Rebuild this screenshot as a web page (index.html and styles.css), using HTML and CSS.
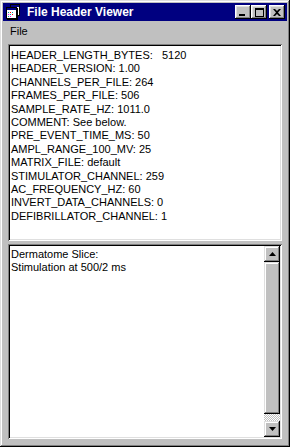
FILE: index.html
```html
<!doctype html>
<html lang="en">
<head>
  <meta charset="UTF-8">
  <title>File Header Viewer</title>
  <link rel="stylesheet" href="styles.css">
</head>
<body>
  <div class="window">
    <div class="titlebar">
      <svg class="app-icon" width="16" height="16" viewBox="0 0 16 16">
        <rect x="5.5" y="0.5" width="9" height="11" fill="#fff" stroke="#000"/>
        <rect x="6" y="1" width="8" height="2" fill="#000080"/>
        <rect x="1.5" y="3.5" width="10" height="11" fill="#fff" stroke="#000"/>
        <rect x="12" y="4" width="1" height="11" fill="#000"/>
        <rect x="2" y="15" width="11" height="1" fill="#000"/>
        <rect x="2" y="4" width="9" height="2" fill="#000080"/>
        <rect x="3" y="8" width="1" height="1" fill="#00a0a0"/>
        <rect x="5" y="8" width="1" height="1" fill="#ff0000"/>
        <rect x="7" y="8" width="1" height="1" fill="#00a0a0"/>
        <rect x="3" y="10" width="1" height="1" fill="#ff00ff"/>
        <rect x="5" y="10" width="1" height="1" fill="#00a0a0"/>
        <rect x="7" y="10" width="1" height="1" fill="#ff0000"/>
        <rect x="3" y="12" width="1" height="1" fill="#00a0a0"/>
        <rect x="5" y="12" width="1" height="1" fill="#ff00ff"/>
      </svg>
      <span class="title">File Header Viewer</span>
      <div class="caption-btns">
        <div class="cap-btn">
          <svg width="8" height="7" viewBox="0 0 8 7"><rect x="0" y="5" width="6" height="2" fill="#000"/></svg>
        </div>
        <div class="cap-btn">
          <svg width="9" height="9" viewBox="0 0 9 9"><rect x="0.5" y="0.5" width="8" height="8" fill="none" stroke="#000"/><rect x="0" y="1" width="9" height="1" fill="#000"/></svg>
        </div>
        <div class="cap-btn close">
          <svg width="8" height="7" viewBox="0 0 8 7"><path d="M0 0h2l2 2 2-2h2L5 3.5 8 7H6L4 5 2 7H0l3-3.5z" fill="#000"/></svg>
        </div>
      </div>
    </div>

    <div class="menubar">
      <span class="menu-item">File</span>
    </div>

    <div class="content">
      <div class="field header-box">
<pre class="text">HEADER_LENGTH_BYTES:   5120
HEADER_VERSION: 1.00
CHANNELS_PER_FILE: 264
FRAMES_PER_FILE: 506
SAMPLE_RATE_HZ: 1011.0
COMMENT: See below.
PRE_EVENT_TIME_MS: 50
AMPL_RANGE_100_MV: 25
MATRIX_FILE: default
STIMULATOR_CHANNEL: 259
AC_FREQUENCY_HZ: 60
INVERT_DATA_CHANNELS: 0
DEFIBRILLATOR_CHANNEL: 1</pre>
      </div>

      <div class="field comment-box">
<pre class="text comment">Dermatome Slice:
Stimulation at 500/2 ms</pre>
        <div class="scrollbar">
          <div class="sb-btn">
            <svg width="7" height="4" viewBox="0 0 7 4"><path d="M3.5 0L7 4H0z" fill="#000"/></svg>
          </div>
          <div class="sb-track">
            <div class="sb-thumb"></div>
          </div>
          <div class="sb-btn">
            <svg width="7" height="4" viewBox="0 0 7 4"><path d="M0 0h7L3.5 4z" fill="#000"/></svg>
          </div>
        </div>
      </div>
    </div>
  </div>
</body>
</html>
```

FILE: styles.css
```css
* {
  margin: 0;
  padding: 0;
  box-sizing: border-box;
}
body {
  background-color: #c0c0c0;
  font-family: "Liberation Sans", Arial, sans-serif;
  font-size: 11px;
  color: #000;
}
.window {
  width: 290px;
  height: 447px;
  padding: 3px;
  background-color: #c0c0c0;
  display: flex;
  flex-direction: column;
  box-shadow: inset -1px -1px #000, inset 1px 1px #dfdfdf,
              inset -2px -2px #808080, inset 2px 2px #fff;
}
.titlebar {
  height: 18px;
  background-color: #000080;
  display: flex;
  align-items: center;
  padding: 0 2px 0 2px;
}
.app-icon {
  display: block;
  margin-right: 6px;
}
.title {
  color: #fff;
  font-weight: bold;
  font-size: 12px;
  flex: 1;
}
.caption-btns {
  display: flex;
}
.cap-btn {
  width: 16px;
  height: 14px;
  background-color: #c0c0c0;
  display: flex;
  align-items: center;
  justify-content: center;
  box-shadow: inset -1px -1px #000, inset 1px 1px #fff,
              inset -2px -2px #808080, inset 2px 2px #dfdfdf;
}
.cap-btn svg {
  display: block;
}
.cap-btn.close {
  margin-left: 2px;
}
.menubar {
  height: 19px;
  display: flex;
  align-items: center;
  padding-left: 7px;
}
.menu-item {
  font-size: 11px;
}
.content {
  flex: 1;
  display: flex;
  flex-direction: column;
  gap: 3px;
  padding: 4px 5px 5px 5px;
}
.field {
  background-color: #fff;
  padding: 2px;
  box-shadow: inset 1px 1px #808080, inset -1px -1px #fff,
              inset 2px 2px #000, inset -2px -2px #dfdfdf;
}
.header-box {
  height: 197px;
}
.comment-box {
  flex: 1;
  display: flex;
}
.text {
  font-family: "Liberation Sans", Arial, sans-serif;
  font-size: 11px;
  line-height: 13.4px;
  padding: 3px 1px;
  white-space: pre;
}
.comment {
  flex: 1;
  line-height: 13px;
  padding-top: 2px;
}
.scrollbar {
  width: 16px;
  display: flex;
  flex-direction: column;
}
.sb-btn {
  height: 16px;
  background-color: #c0c0c0;
  display: flex;
  align-items: center;
  justify-content: center;
  box-shadow: inset -1px -1px #000, inset 1px 1px #dfdfdf,
              inset -2px -2px #808080, inset 2px 2px #fff;
}
.sb-btn svg {
  display: block;
}
.sb-track {
  flex: 1;
  background-color: #fff;
  background-image: repeating-conic-gradient(#c0c0c0 0 25%, #fff 0 50%);
  background-size: 2px 2px;
}
.sb-thumb {
  height: 152px;
  background-color: #c0c0c0;
  box-shadow: inset -1px -1px #000, inset 1px 1px #dfdfdf,
              inset -2px -2px #808080, inset 2px 2px #fff;
}
```
